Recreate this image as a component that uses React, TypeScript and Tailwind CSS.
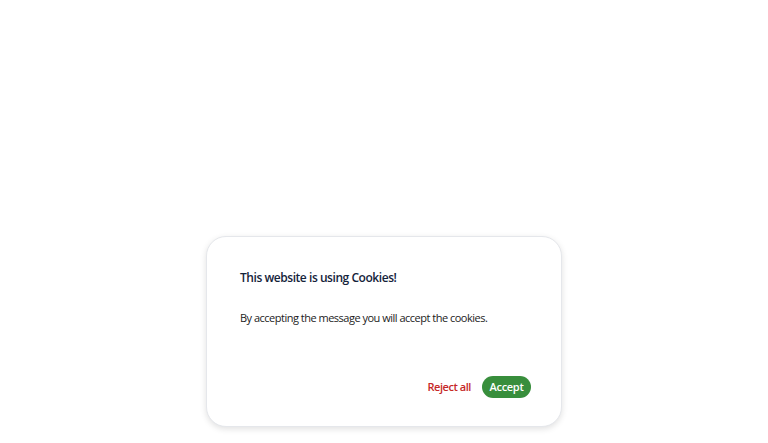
export default function App() {
  return (
    <div
      className="min-h-screen bg-white flex flex-col items-center justify-end pb-4"
      style={{ fontFamily: '"Open Sans", sans-serif' }}
    >
      <div className="w-[356px] h-[191px] rounded-[20px] border border-gray-200 bg-white shadow-[0_2px_6px_rgba(0,0,0,0.12)] flex flex-col pl-[33px] pr-[30px] pt-[32px] pb-[28px]">
        <h2 className="text-[12px] leading-[18px] font-semibold tracking-[-0.45px] text-[#14233a]">
          This website is using Cookies!
        </h2>
        <p className="mt-[23px] text-[11px] leading-[16px] tracking-[-0.5px] text-[#222]">
          By accepting the message you will accept the cookies.
        </p>
        <div className="mt-auto flex items-center justify-end gap-[11px]">
          <button className="text-[11px] font-semibold tracking-[-0.45px] text-[#c62828]">
            Reject all
          </button>
          <button className="h-[22px] w-[49px] rounded-full bg-[#388e3c] text-[11px] font-semibold tracking-[-0.3px] text-white">
            Accept
          </button>
        </div>
      </div>
    </div>
  );
}
